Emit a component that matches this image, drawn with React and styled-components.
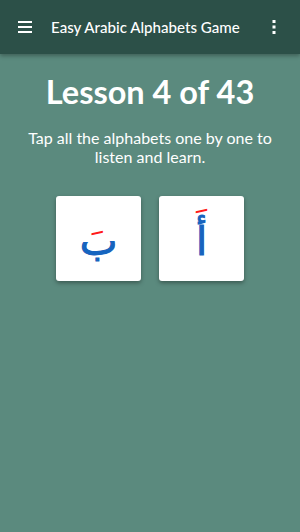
import styled, { createGlobalStyle } from 'styled-components';

const GlobalStyle = createGlobalStyle`
  html, body {
    margin: 0;
    padding: 0;
    height: 100%;
    background: #5b8a7e;
  }
  #root {
    min-height: 100%;
  }
`;

const letters = [
  { base: 'ب', marked: 'بَ' },
  { base: 'أ', marked: 'أَ' },
];

function App() {
  return (
    <StyledPage>
      <GlobalStyle />
      <StyledToolbar>
        <StyledIconButton aria-label="menu">
          <svg width="14" height="12" viewBox="0 0 14 12">
            <rect x="0" y="0" width="14" height="2" fill="#fff" />
            <rect x="0" y="5" width="14" height="2" fill="#fff" />
            <rect x="0" y="10" width="14" height="2" fill="#fff" />
          </svg>
        </StyledIconButton>
        <StyledToolbarTitle>Easy Arabic Alphabets Game</StyledToolbarTitle>
        <StyledIconButton aria-label="more">
          <svg width="4" height="14" viewBox="0 0 4 14">
            <rect x="0.5" y="0" width="3" height="3" fill="#fff" />
            <rect x="0.5" y="5.5" width="3" height="3" fill="#fff" />
            <rect x="0.5" y="11" width="3" height="3" fill="#fff" />
          </svg>
        </StyledIconButton>
      </StyledToolbar>
      <StyledContent>
        <StyledLessonTitle>Lesson 4 of 43</StyledLessonTitle>
        <StyledInstruction>
          Tap all the alphabets one by one to listen and learn.
        </StyledInstruction>
        <StyledCardRow>
          {letters.map((l) => (
            <StyledLetterCard key={l.base}>
              <StyledLetter>
                <StyledMark>{l.marked}</StyledMark>
                <StyledBase>{l.base}</StyledBase>
              </StyledLetter>
            </StyledLetterCard>
          ))}
        </StyledCardRow>
      </StyledContent>
    </StyledPage>
  );
}

const StyledPage = styled.div`
  min-height: 532px;
  background: #5b8a7e;
  font-family: Lato, 'Liberation Sans', sans-serif;
  color: #fff;
`;

const StyledToolbar = styled.header`
  display: flex;
  align-items: center;
  height: 54px;
  padding: 0 12px 0 11px;
  background: #2c5048;
  box-shadow: 0 2px 4px rgba(0, 0, 0, 0.3);
  box-sizing: border-box;
`;

const StyledIconButton = styled.div`
  display: flex;
  align-items: center;
  justify-content: center;
  width: 28px;
  height: 28px;
`;

const StyledToolbarTitle = styled.h1`
  flex: 1;
  margin: 0 0 0 12px;
  font-size: 15.1px;
  font-weight: 500;
  color: #fff;
`;

const StyledContent = styled.main`
  display: flex;
  flex-direction: column;
  align-items: center;
  padding: 18px 16px 0;
`;

const StyledLessonTitle = styled.h2`
  margin: 0;
  font-size: 32.5px;
  font-weight: 700;
  line-height: 40px;
`;

const StyledInstruction = styled.p`
  margin: 16px 0 0;
  font-size: 16px;
  line-height: 19px;
  text-align: center;
  max-width: 256px;
`;

const StyledCardRow = styled.div`
  display: flex;
  gap: 18px;
  margin-top: 30px;
`;

const StyledLetterCard = styled.div`
  display: flex;
  align-items: center;
  justify-content: center;
  width: 85px;
  height: 85px;
  background: #fff;
  border-radius: 3px;
  box-shadow: 0 2px 4px rgba(0, 0, 0, 0.35);
`;

const StyledLetter = styled.div`
  position: relative;
  margin-top: 4px;
  font-family: 'DejaVu Sans', 'Noto Sans', sans-serif;
  font-size: 40px;
  line-height: 1;
  direction: rtl;
`;

const StyledMark = styled.span`
  color: #ff1a1a;
`;

const StyledBase = styled.span`
  position: absolute;
  top: 0;
  right: 0;
  color: #1565c0;
  -webkit-text-stroke: 1px #1565c0;
`;

export default App;
